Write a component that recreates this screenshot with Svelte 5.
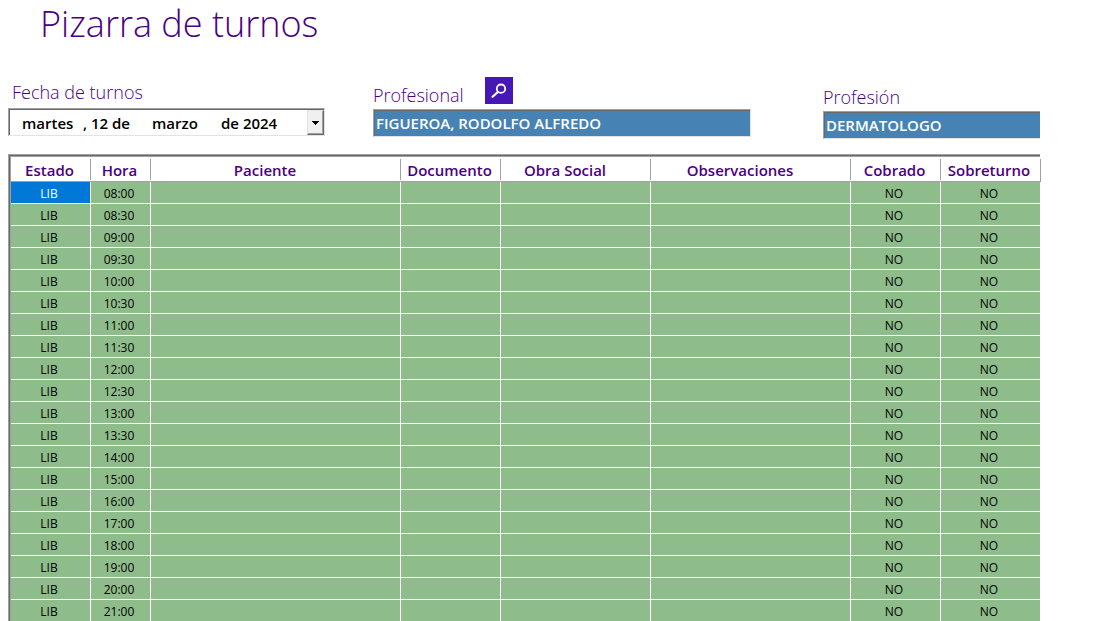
<script>
  const columns = [
    { name: 'Estado', width: 80 },
    { name: 'Hora', width: 60 },
    { name: 'Paciente', width: 250, sortable: true },
    { name: 'Documento', width: 100 },
    { name: 'Obra Social', width: 150, sortable: true },
    { name: 'Observaciones', width: 200, sortable: true },
    { name: 'Cobrado', width: 90 },
    { name: 'Sobreturno', width: 99 }
  ];
  const total = columns.reduce((sum, c) => sum + c.width, 0);

  const hours = [
    '08:00', '08:30', '09:00', '09:30', '10:00', '10:30', '11:00', '11:30', '12:00', '12:30',
    '13:00', '13:30', '14:00', '15:00', '16:00', '17:00', '18:00', '19:00', '20:00', '21:00'
  ];
  const rows = hours.map((hour) => ['LIB', hour, '', '', '', '', 'NO', 'NO']);

  let selected = $state(0);
</script>

<main>
  <h1>Pizarra de turnos</h1>

  <form class="fields" onsubmit={(e) => e.preventDefault()}>
    <div class="field">
      <div class="caption date-caption"><label for="weekday">Fecha de turnos</label></div>
      <div class="box date">
        <input class="weekday" id="weekday" value="martes" />
        <input class="day" aria-label="Día" value=", 12 de" />
        <input class="month" aria-label="Mes" value="marzo" />
        <input class="year" aria-label="Año" value="de 2024" />
        <button class="drop" type="button" aria-label="Abrir calendario">
          <svg viewBox="0 0 7 4" width="7" height="4" shape-rendering="crispEdges"><path d="M0 0h7v1H0zM1 1h5v1H1zM2 2h3v1H2zM3 3h1v1H3z" /></svg>
        </button>
      </div>
    </div>

    <div class="field">
      <div class="caption">
        <label for="professional">Profesional</label>
        <button class="search" type="button" aria-label="Buscar profesional">
          <svg viewBox="0 0 16 16" width="16" height="16" fill="none" stroke="#fff">
            <circle cx="10" cy="5.7" r="4.2" stroke-width="1.8" />
            <path d="M6.8 9 1.6 13.8" stroke-width="2.2" stroke-linecap="round" />
          </svg>
        </button>
      </div>
      <input class="box text" id="professional" value="FIGUEROA, RODOLFO ALFREDO" readonly />
    </div>

    <div class="field lowered">
      <div class="caption"><label for="profession">Profesión</label></div>
      <input class="box text clipped" id="profession" value="DERMATOLOGO" readonly />
    </div>
  </form>

  <div class="board">
    <table>
      <colgroup>
        {#each columns as column}
          <col style="width: {(column.width / total) * 100}%" />
        {/each}
      </colgroup>
      <thead>
        <tr>
          {#each columns as column}
            <th scope="col" class:sortable={column.sortable}>{column.name}</th>
          {/each}
        </tr>
      </thead>
      <tbody>
        {#each rows as row, i}
          <tr class:selected={i === selected} onclick={() => (selected = i)}>
            {#each row as cell}
              <td>{cell}</td>
            {/each}
          </tr>
        {/each}
      </tbody>
    </table>
  </div>
</main>

<style>
  :global(body) {
    background: #fff;
  }

  main {
    padding: 0 58px 0 8px;
    font-family: 'Open Sans', 'Noto Sans', sans-serif;
    color: #000;
  }

  h1 {
    margin: 0;
    padding: 0 32px;
    font-size: 36px;
    line-height: 48px;
    font-weight: 300;
    color: #4b0082;
  }

  .fields {
    display: grid;
    grid-template-columns: 317fr 48fr 378fr 72fr 217fr;
    padding-top: 29px;
    align-items: start;
  }

  .field:nth-child(2) {
    grid-column: 3;
  }

  .field:nth-child(3) {
    grid-column: 5;
  }

  .field.lowered {
    padding-top: 2px;
  }

  .caption {
    display: flex;
    align-items: flex-end;
    gap: 21px;
    height: 27px;
    margin-bottom: 5px;
    font-size: 18px;
    line-height: 18px;
    font-weight: 300;
    color: #4b0082;
  }

  .date-caption {
    box-sizing: border-box;
    align-items: center;
    margin-bottom: 4px;
    padding: 2px 0 0 4px;
  }

  .search {
    display: grid;
    place-items: center;
    width: 28px;
    height: 27px;
    padding: 0;
    border: 0;
    background: #4617b4;
  }

  .box {
    box-sizing: border-box;
    width: 100%;
    height: 28px;
    margin: 0;
    border: 1px solid;
    border-color: #a0a0a0 #e3e3e3 #e3e3e3 #a0a0a0;
    box-shadow: inset 1px 1px #696969;
    border-radius: 0;
    outline: 0;
  }

  .text {
    display: block;
    padding: 0 2px;
    background: #4682b4;
    color: #fff;
    font: 600 15px 'Open Sans', 'Noto Sans', sans-serif;
  }

  .clipped {
    border-right: 0;
  }

  .date {
    display: flex;
    padding: 1px 0 0 13px;
  }

  .date input {
    flex: none;
    box-sizing: border-box;
    padding: 0;
    border: 0;
    outline: 0;
    background: none;
    font: 600 15px 'Open Sans', 'Noto Sans', sans-serif;
  }

  .weekday {
    width: 61px;
  }

  .day,
  .month {
    width: 69px;
  }

  .year {
    width: 70px;
  }

  .drop {
    display: grid;
    place-items: center;
    width: 17px;
    margin-left: auto;
    padding: 0;
    border: 1px solid;
    border-color: #e3e3e3 #696969 #696969 #e3e3e3;
    box-shadow: inset -1px -1px #a0a0a0;
    background: #f0f0f0;
  }

  .board {
    margin-top: 15px;
    border: 1px solid #a0a0a0;
    border-width: 1px 0 0 1px;
    box-shadow: inset 1px 1px #696969, inset 2px 2px #a0a0a0;
    padding: 2px 0 0 2px;
  }

  table {
    width: 100%;
    table-layout: fixed;
    border-collapse: separate;
    border-spacing: 0;
  }

  th {
    position: relative;
    padding: 2px 3px 0 0;
    border-bottom: 1px solid #a0a0a0;
    font-size: 15px;
    line-height: 22px;
    font-weight: 600;
    white-space: nowrap;
    color: #4b0082;
  }

  th.sortable {
    padding-right: 22px;
  }

  th::after {
    content: '';
    position: absolute;
    top: 2px;
    right: 0;
    bottom: 1px;
    width: 1px;
    background: #a0a0a0;
  }

  th:last-child::after {
    right: -1px;
    bottom: -1px;
  }

  td {
    height: 19px;
    padding: 2px 3px 0 0;
    border-right: 1px solid #fff;
    border-bottom: 1px solid #fff;
    background: #8fbc8b;
    font-size: 12px;
    line-height: 19px;
    text-align: center;
  }

  td:last-child {
    border-right: 0;
  }

  tr:last-child td {
    border-bottom: 0;
  }

  .selected td:first-child {
    background: #0078d7;
    color: #fff;
  }
</style>
